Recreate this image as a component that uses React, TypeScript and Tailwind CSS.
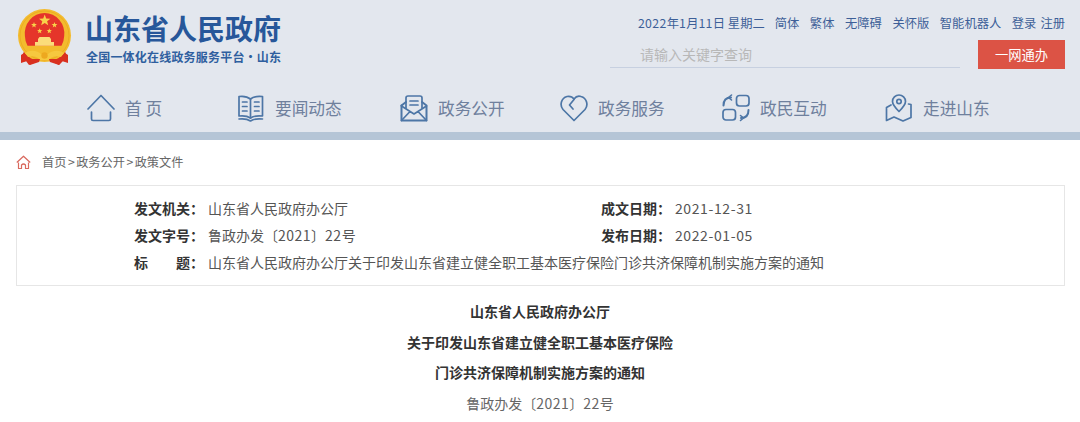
import React from "react";

const FONT = "font-['Noto_Sans_CJK_SC','Noto_Sans',sans-serif]";

function star(cx: number, cy: number, r: number) {
  const pts: string[] = [];
  for (let i = 0; i < 10; i++) {
    const rad = i % 2 === 0 ? r : r * 0.42;
    const a = -Math.PI / 2 + (i * Math.PI) / 5;
    pts.push(`${(cx + rad * Math.cos(a)).toFixed(2)},${(cy + rad * Math.sin(a)).toFixed(2)}`);
  }
  return pts.join(" ");
}

function Emblem() {
  return (
    <svg width="56" height="58" viewBox="0 0 56 58">
      <path d="M7 42 L4 53 L9 52 L12 56 L22 52 H34 L42 56 L46 52 L51 53 L48 42 Z" fill="#d9301f" />
      <circle cx="27.5" cy="26.5" r="26.5" fill="#f3bb2e" />
      <circle cx="27.5" cy="26.5" r="24.5" fill="none" stroke="#e8a820" strokeWidth="0.8" />
      <path d="M7.9 27 A19.8 20.5 0 1 1 47.2 27 Q47 32 44.5 36.8 H10.5 Q8 32 7.9 27 Z" fill="#e5352a" />
      <polygon points={star(27.7, 11.5, 6)} fill="#f8d24a" />
      <polygon points={star(17, 16, 3)} fill="#f8d24a" />
      <polygon points={star(37.5, 16, 3)} fill="#f8d24a" />
      <polygon points={star(22.7, 22, 2.8)} fill="#f8d24a" />
      <polygon points={star(32.3, 22, 2.8)} fill="#f8d24a" />
      <path d="M22.5 28 H32.5 L34 30 H21 Z" fill="#fbdc7a" />
      <rect x="21" y="30" width="13" height="3" fill="#fbdc7a" />
      <rect x="18" y="33" width="19" height="3.8" fill="#fbdc7a" />
      <path d="M8 44 C14 40 21 42 24 45 H31 C34 42 41 40 47 44 L44 48 C38 46 34 48 32 51 H23 C21 48 17 46 11 48 Z" fill="#f6c83f" />
      <path d="M4 46 L7 44 L12 50 L23 50 L22 53 L13 56 L10 52 L4 54 Z M51 46 L48 44 L43 50 L32 50 L33 53 L42 56 L45 52 L51 54 Z" fill="#d9301f" />
      <circle cx="27.5" cy="46.5" r="3.2" fill="#eda81f" />
    </svg>
  );
}

const iconProps = {
  width: 28,
  height: 28,
  viewBox: "0 0 28 28",
  fill: "none",
  stroke: "#4d76a6",
  strokeWidth: 1.7,
  strokeLinecap: "round" as const,
  strokeLinejoin: "round" as const,
};

const HomeIcon = () => (
  <svg {...iconProps}>
    <path d="M1 15 L14 1.5 L27 15" />
    <path d="M4.5 18 V25 Q4.5 26.5 6 26.5 H22 Q23.5 26.5 23.5 25 V18" />
  </svg>
);
const BookIcon = () => (
  <svg {...iconProps}>
    <path d="M13.5 5 C10.5 2.5 6 2 2 2.5 V22 C6 21.5 10.5 22 13.5 24 C16.5 22 21 21.5 25.5 22 V2.5 C21 2 16.5 2.5 13.5 5 Z" />
    <path d="M13.5 5 V24" />
    <path d="M5.5 8 H10 M5.5 12.5 H10 M5.5 17 H10 M17.5 8 H22 M17.5 12.5 H22 M17.5 17 H22" />
    <path d="M2 25 C6 24.5 10.5 25 13.5 27 C16.5 25 21 24.5 25.5 25" />
  </svg>
);
const MailIcon = () => (
  <svg {...iconProps}>
    <path d="M1.5 11.5 V26.5 H26.5 V11.5 L22 8" strokeWidth="2" />
    <path d="M1.5 11.5 L6 8" strokeWidth="2" />
    <path d="M6 14 V4 Q6 2 8 2 H20 Q22 2 22 4 V14" />
    <path d="M10 7 H18 M10 11 H18" />
    <path d="M1.5 12 L14 20 L26.5 12 M1.5 26.5 L10 17.5 M26.5 26.5 L18 17.5" />
  </svg>
);
const HeartIcon = () => (
  <svg {...iconProps}>
    <path d="M14 26.5 L3 15.5 C-0.5 11.5 1 4 7 2.5 C10 2 12.5 3 14 5 C15.5 3 18 1.5 21 2.5 C27 4 28.5 11.5 25 15.5 Z" />
    <path d="M14 5.5 L9.5 11 L13 15" />
  </svg>
);
const SwapIcon = () => (
  <svg {...iconProps}>
    <rect x="14.5" y="1.5" width="12.5" height="10.5" rx="3" />
    <rect x="1" y="15.5" width="12.5" height="10.5" rx="3" />
    <path d="M1.5 11.5 C1.5 6 4 3.5 9 3.5" strokeWidth="2" />
    <path d="M9.5 1 L6.5 3.5 L9.5 6" strokeWidth="1.6" />
    <path d="M26.5 16 C26.5 21.5 24 24 19 24" strokeWidth="2" />
    <path d="M18.5 21.5 L21.5 24 L18.5 26.5" strokeWidth="1.6" />
  </svg>
);
const PinIcon = () => (
  <svg {...iconProps}>
    <path d="M14 17.5 C10 13.5 7.5 11 7.5 7.5 A6.5 6.5 0 0 1 20.5 7.5 C20.5 11 18 13.5 14 17.5 Z" />
    <circle cx="14" cy="7.5" r="2.2" />
    <path d="M6 11 L1.5 13.5 V26.5 L9 23 L18 27 L26 23.5 V10.5 L23.5 10" />
  </svg>
);

const NAV = [
  { label: "首 页", Icon: HomeIcon },
  { label: "要闻动态", Icon: BookIcon },
  { label: "政务公开", Icon: MailIcon },
  { label: "政务服务", Icon: HeartIcon },
  { label: "政民互动", Icon: SwapIcon },
  { label: "走进山东", Icon: PinIcon },
];

const TOP_LINKS = ["简体", "繁体", "无障碍", "关怀版", "智能机器人"];

function MetaLabel({ children }: { children: React.ReactNode }) {
  return <span className="w-[70px] mr-[4px] font-bold text-[#333] shrink-0">{children}</span>;
}

function DocNo() {
  return (
    <span>
      鲁政办发〔<span className="tracking-[0.5px]">2021</span>〕<span className="tracking-[0.5px]">22</span>号
    </span>
  );
}

export default function App() {
  return (
    <div className={`${FONT} w-[1080px] h-[422px] overflow-hidden bg-white`}>
      <header className="bg-[#e3e7ee] border-b-[8px] border-[#b5c5d6] h-[140px]">
        <div className="flex justify-between pl-[17px] pr-[15px] h-[82px]">
          <div className="flex pt-[9px]">
            <Emblem />
            <div className="ml-[13px] flex flex-col">
              <h1 className="-ml-[1px] text-[28px] leading-[38px] font-bold text-[#27579a]">山东省人民政府</h1>
              <p className="text-[12px] leading-[18px] mt-[1px] font-bold text-[#2f5f9f] tracking-[0.2px]">
                全国一体化在线政务服务平台·山东
              </p>
            </div>
          </div>
          <div className="flex flex-col items-end">
            <div className="flex mt-[14px] h-[18px] items-center text-[12.3px] leading-[18px] text-[#3d5f98]">
              <span className="mr-[10px]">
                <span className="tracking-[0.35px]">2022</span>年<span className="tracking-[0.35px]">1</span>月<span className="tracking-[0.35px]">11</span>日 星期二
              </span>
              {TOP_LINKS.map((t) => (
                <span key={t} className="mr-[10.5px]">{t}</span>
              ))}
              <span className="mr-[4px]">登录</span>
              <span>注册</span>
            </div>
            <div className="flex items-start mt-[8px]">
              <div className="w-[350px] h-[28px] border-b border-[#c7d0e0] pl-[30px] text-[14px] leading-[29px] text-[#b8b8b8]">
                请输入关键字查询
              </div>
              <button className="ml-[18px] w-[87px] h-[29px] bg-[#dc5345] text-white text-[13.3px] leading-[29px] text-center">
                一网通办
              </button>
            </div>
          </div>
        </div>
        <nav className="grid grid-cols-[150px_163px_160px_162px_163px_auto] pl-[87px] pt-[12px] h-[44px]">
          {NAV.map(({ label, Icon }) => (
            <a key={label} className="flex items-center gap-[10px] h-[28px] text-[16.7px] text-[#6f809d]">
              <Icon />
              <span className="pt-[1px]">{label}</span>
            </a>
          ))}
        </nav>
      </header>

      <div className="flex items-center h-[44px] mb-[1px] pl-[16px] text-[12.2px] text-[#666]">
        <svg width="15" height="15" viewBox="0 0 15 15" fill="none" stroke="#d9695e" strokeWidth="1.2" strokeLinejoin="round">
          <path d="M0.8 7.5 L7.5 1.2 L14.2 7.5" />
          <path d="M2.5 7.5 V13.5 H5.5 V10 Q7.5 8 9.5 10 V13.5 H12.5 V7.5" />
        </svg>
        <span className="ml-[11px]">
          首页<span className="mx-[1.5px]">&gt;</span>政务公开<span className="mx-[1.5px]">&gt;</span>政策文件
        </span>
      </div>

      <section className="mx-[16px] w-[1049px] h-[101px] border border-[#e6e6e6] pt-[9px] pl-[117px] text-[14px] leading-[27px] text-[#555]">
        <div className="flex">
          <div className="flex w-[467px]">
            <MetaLabel>发文机关：</MetaLabel>
            <span>山东省人民政府办公厅</span>
          </div>
          <div className="flex">
            <MetaLabel>成文日期：</MetaLabel>
            <span className="tracking-[0.6px]">2021-12-31</span>
          </div>
        </div>
        <div className="flex">
          <div className="flex w-[467px]">
            <MetaLabel>发文字号：</MetaLabel>
            <DocNo />
          </div>
          <div className="flex">
            <MetaLabel>发布日期：</MetaLabel>
            <span className="tracking-[0.6px]">2022-01-05</span>
          </div>
        </div>
        <div className="flex">
          <span className="w-[70px] mr-[4px] font-bold text-[#333] shrink-0 flex justify-between">
            <span>标</span>
            <span>题：</span>
          </span>
          <span>山东省人民政府办公厅关于印发山东省建立健全职工基本医疗保险门诊共济保障机制实施方案的通知</span>
        </div>
      </section>

      <article className="pt-[10px] text-center text-[14px] leading-[30.7px] text-[#333]">
        <p className="font-bold">山东省人民政府办公厅</p>
        <p className="font-bold">关于印发山东省建立健全职工基本医疗保险</p>
        <p className="font-bold">门诊共济保障机制实施方案的通知</p>
        <p className="text-[#666]"><DocNo /></p>
      </article>
    </div>
  );
}
